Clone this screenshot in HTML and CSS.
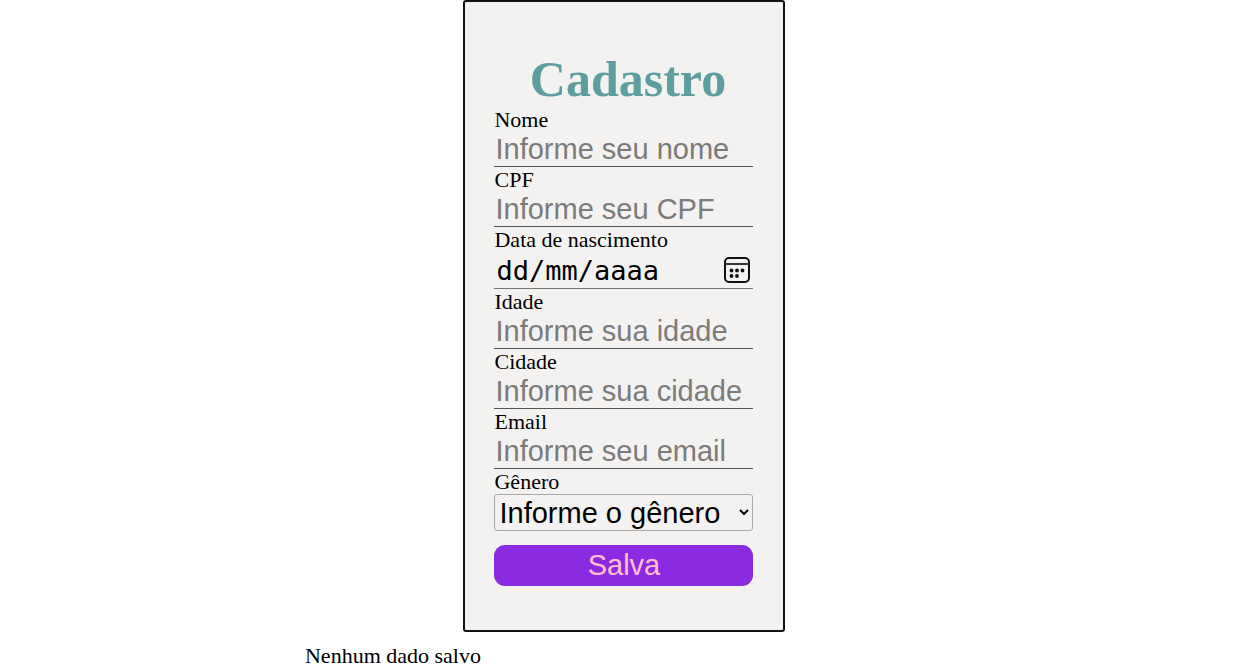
FILE: index.html
```html
<!DOCTYPE html>
<html lang="pt-BR">
<head>
<meta charset="utf-8">
<meta name="viewport" content="width=device-width, initial-scale=1">
<title>Cadastro</title>
<link rel="stylesheet" href="styles.css">
</head>
<body>
<main class="page">
  <form class="card">
    <h1 class="title">Cadastro</h1>
    <label class="label" for="nome">Nome</label>
    <input class="field" id="nome" type="text" placeholder="Informe seu nome">
    <label class="label" for="cpf">CPF</label>
    <input class="field" id="cpf" type="text" placeholder="Informe seu CPF">
    <label class="label" for="nascimento">Data de nascimento</label>
    <div class="date">
      <input class="field date-field" id="nascimento" type="text" placeholder="dd/mm/aaaa">
      <button class="date-button" type="button" aria-label="Abrir calendário">
        <svg class="calendar" viewBox="0 0 26 26" fill="none" stroke="#111" stroke-width="2" aria-hidden="true">
          <rect x="1" y="1" width="24" height="24" rx="4"/>
          <path d="M1 7h24" stroke="#333"/>
          <g fill="#111" stroke="none">
            <circle cx="7.5" cy="13.5" r="1.9"/><circle cx="13" cy="13.5" r="1.9"/><circle cx="18.5" cy="13.5" r="1.9"/>
            <circle cx="7.5" cy="19" r="1.9"/><circle cx="13" cy="19" r="1.9"/>
          </g>
        </svg>
      </button>
    </div>
    <label class="label" for="idade">Idade</label>
    <input class="field" id="idade" type="text" placeholder="Informe sua idade">
    <label class="label" for="cidade">Cidade</label>
    <input class="field" id="cidade" type="text" placeholder="Informe sua cidade">
    <label class="label" for="email">Email</label>
    <input class="field" id="email" type="email" placeholder="Informe seu email">
    <label class="label" for="genero">Gênero</label>
    <select class="select" id="genero">
      <option>Informe o gênero</option>
      <option>Feminino</option>
      <option>Masculino</option>
    </select>
    <button class="save" type="submit">Salva</button>
  </form>
  <p class="status">Nenhum dado salvo</p>
</main>
</body>
</html>
```
FILE: styles.css
```css
* {
  box-sizing: border-box;
}

body {
  margin: 0;
  background: #fff;
  color: #000;
  font-family: "Liberation Serif", "Times New Roman", serif;
  font-size: 22px;
  line-height: 25px;
}

.page {
  width: 53%;
  margin: 0 auto;
  padding-left: 15px;
}

.card {
  display: flex;
  flex-direction: column;
  width: 322px;
  margin: 0 auto;
  padding: 50px 30px 44px 29px;
  border: 2px solid #111;
  border-radius: 3px;
  background: #f3f2f1;
}

.title {
  margin: 0 0 0 8px;
  color: cadetblue;
  font-size: 50px;
  line-height: 55px;
  text-align: center;
}

.field {
  width: 100%;
  min-width: 0;
  height: 35px;
  padding: 0 1px;
  border: 0;
  border-bottom: 1px solid #555;
  border-radius: 0;
  outline: 0;
  background: transparent;
  color: #000;
  font-family: "Liberation Sans", Arial, sans-serif;
  font-size: 29px;
}

.field::placeholder {
  color: #7b7b7b;
  opacity: 1;
}

.date {
  display: flex;
  align-items: center;
  border-bottom: 1px solid #777;
}

.date-field {
  flex: 1;
  height: 36px;
  padding: 0 2px;
  border: 0;
  font-family: "DejaVu Sans Mono", monospace;
  font-size: 27px;
}

.date-field::placeholder {
  color: #000;
}

.date-button {
  display: flex;
  margin-right: 3px;
  padding: 0;
  border: 0;
  background: none;
}

.calendar {
  width: 26px;
  height: 26px;
}

.select {
  width: 100%;
  height: 37px;
  padding: 0;
  border: 1px solid #aaa;
  border-radius: 3px;
  background-color: transparent;
  color: #000;
  font-family: "Liberation Sans", Arial, sans-serif;
  font-size: 29px;
}

.save {
  height: 41px;
  margin-top: 14px;
  padding: 0;
  border: 0;
  border-radius: 11px;
  background: blueviolet;
  color: pink;
  font-family: "Liberation Sans", Arial, sans-serif;
  font-size: 29px;
}

.status {
  margin: 11px 0 0;
}
```
